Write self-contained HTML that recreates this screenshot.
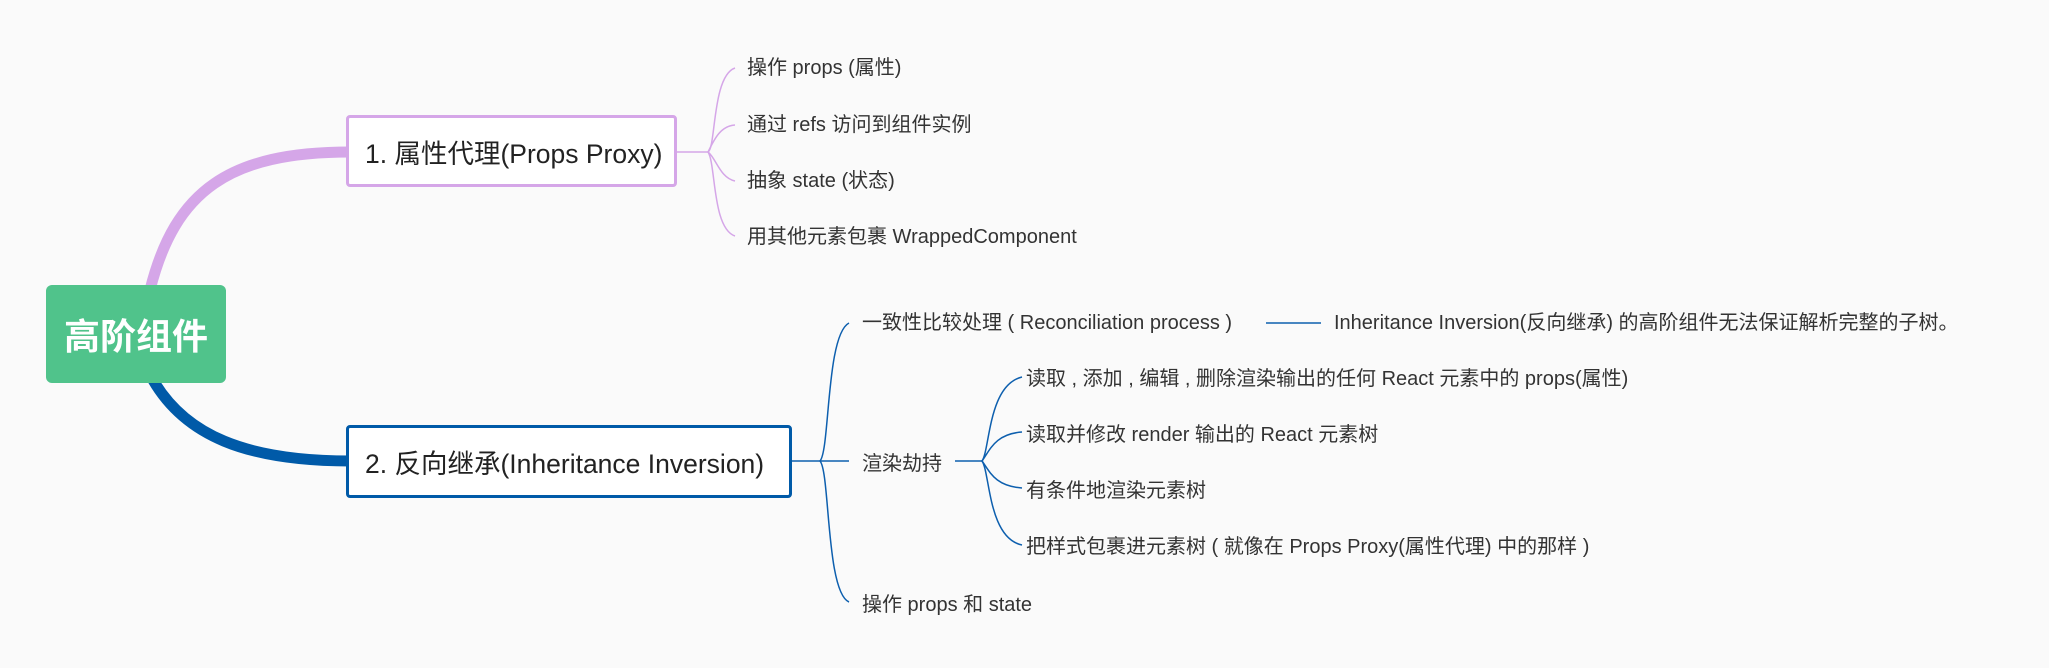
<!DOCTYPE html>
<html><head><meta charset="utf-8"><style>
body{margin:0;width:2049px;height:668px;background:#fafafa;overflow:hidden;position:relative;font-family:"Liberation Sans","Noto Sans CJK SC",sans-serif;color:#333}
.t{position:absolute;font-size:20px;white-space:nowrap;line-height:24px;transform:translateY(-12px)}
.box{position:absolute;box-sizing:border-box;background:#fff;border-radius:4px;font-size:26.5px;display:flex;align-items:center;padding-left:16px;white-space:nowrap;color:#222}
</style></head><body>
<svg width="2049" height="668" style="position:absolute;left:0;top:0" fill="none">
<path d="M150 290 C175 190 230 152 350 152" stroke="#d5a6e8" stroke-width="11"/>
<path d="M153 380 C185 435 245 461 350 461" stroke="#005aa8" stroke-width="11"/>
<g stroke="#d5a6e8" stroke-width="1.5">
<path d="M677 152 H708"/>
<path d="M708 152 C716 148 712 76 735 68"/>
<path d="M708 152 C714 140 720 126 735 125"/>
<path d="M708 152 C716 158 720 178 735 181"/>
<path d="M708 152 C716 164 712 228 735 236"/>
</g>
<g stroke="#0d5fae" stroke-width="1.5">
<path d="M792 461 H820"/>
<path d="M820 461 C830 450 826 335 849 323"/>
<path d="M820 461 H849"/>
<path d="M820 461 C830 472 826 592 849 602"/>
<path d="M1266 323 H1321"/>
<path d="M955 461 H982"/>
<path d="M982 461 C990 450 988 385 1022 377"/>
<path d="M982 461 C990 450 995 434 1022 432"/>
<path d="M982 461 C990 472 995 486 1022 488"/>
<path d="M982 461 C990 472 988 538 1022 545"/>
</g>
</svg>
<div class="box" style="left:46px;top:285px;width:180px;height:98px;background:#50c38b;border-radius:6px;color:#fff;font-weight:bold;font-size:36px;justify-content:center;padding:0">高阶组件</div>
<div class="box" style="left:346px;top:115px;width:331px;height:72px;border:3px solid #d5a6e8">1. 属性代理(Props Proxy)</div>
<div class="box" style="left:346px;top:425px;width:446px;height:73px;border:3px solid #005aa8">2. 反向继承(Inheritance Inversion)</div>
<div class="t" style="left:747px;top:68px">操作 props (属性)</div>
<div class="t" style="left:747px;top:125px">通过 refs 访问到组件实例</div>
<div class="t" style="left:747px;top:181px">抽象 state (状态)</div>
<div class="t" style="left:747px;top:237px">用其他元素包裹 WrappedComponent</div>
<div class="t" style="left:862px;top:323px">一致性比较处理 ( Reconciliation process )</div>
<div class="t" style="left:1334px;top:323px">Inheritance Inversion(反向继承) 的高阶组件无法保证解析完整的子树。</div>
<div class="t" style="left:862px;top:464px">渲染劫持</div>
<div class="t" style="left:862px;top:605px">操作 props 和 state</div>
<div class="t" style="left:1026px;top:379px">读取 , 添加 , 编辑 , 删除渲染输出的任何 React 元素中的 props(属性)</div>
<div class="t" style="left:1026px;top:435px">读取并修改 render 输出的 React 元素树</div>
<div class="t" style="left:1026px;top:491px">有条件地渲染元素树</div>
<div class="t" style="left:1026px;top:547px">把样式包裹进元素树 ( 就像在 Props Proxy(属性代理) 中的那样 )</div>
</body></html>
